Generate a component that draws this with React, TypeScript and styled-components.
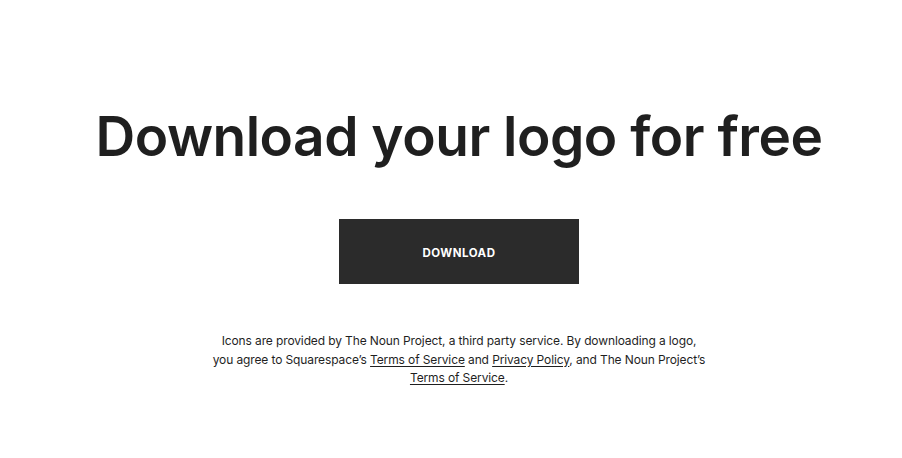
import React from "react";
import styled, { createGlobalStyle } from "styled-components";

const Global = createGlobalStyle`
  html, body { margin: 0; padding: 0; background: #fff; }
  body { font-family: Inter, "Liberation Sans", sans-serif; color: #1f1f1f; }
`;

const Page = styled.main`
  display: flex;
  flex-direction: column;
  align-items: center;
  padding: 104px 0 0 16px;
`;

const Title = styled.h1`
  margin: 0;
  font-size: 55px;
  font-weight: 600;
  letter-spacing: -0.5px;
  line-height: 64px;
  color: #1f1f1f;
  white-space: nowrap;
`;

const Button = styled.button`
  margin-top: 51px;
  width: 240px;
  height: 65px;
  padding-top: 3px;
  border: none;
  background: #2b2b2b;
  color: #fff;
  font-family: Inter, "Liberation Sans", sans-serif;
  font-weight: 700;
  font-size: 11.5px;
  letter-spacing: 0.5px;
  cursor: pointer;
`;

const Note = styled.p`
  margin: 48px 0 0;
  text-align: center;
  font-size: 12px;
  letter-spacing: -0.12px;
  line-height: 18.5px;
  color: #1f1f1f;
  white-space: nowrap;
`;

const Link = styled.a`
  color: inherit;
  text-decoration: underline;
  text-underline-offset: 2px;
`;

export default function App() {
  return (
    <>
      <Global />
      <Page>
        <Title>Download your logo for free</Title>
        <Button>DOWNLOAD</Button>
        <Note>
          Icons are provided by The Noun Project, a third party service. By downloading a logo,
          <br />
          you agree to Squarespace’s <Link href="#">Terms of Service</Link> and{" "}
          <Link href="#">Privacy Policy</Link>, and The Noun Project’s
          <br />
          <Link href="#">Terms of Service</Link>.
        </Note>
      </Page>
    </>
  );
}
